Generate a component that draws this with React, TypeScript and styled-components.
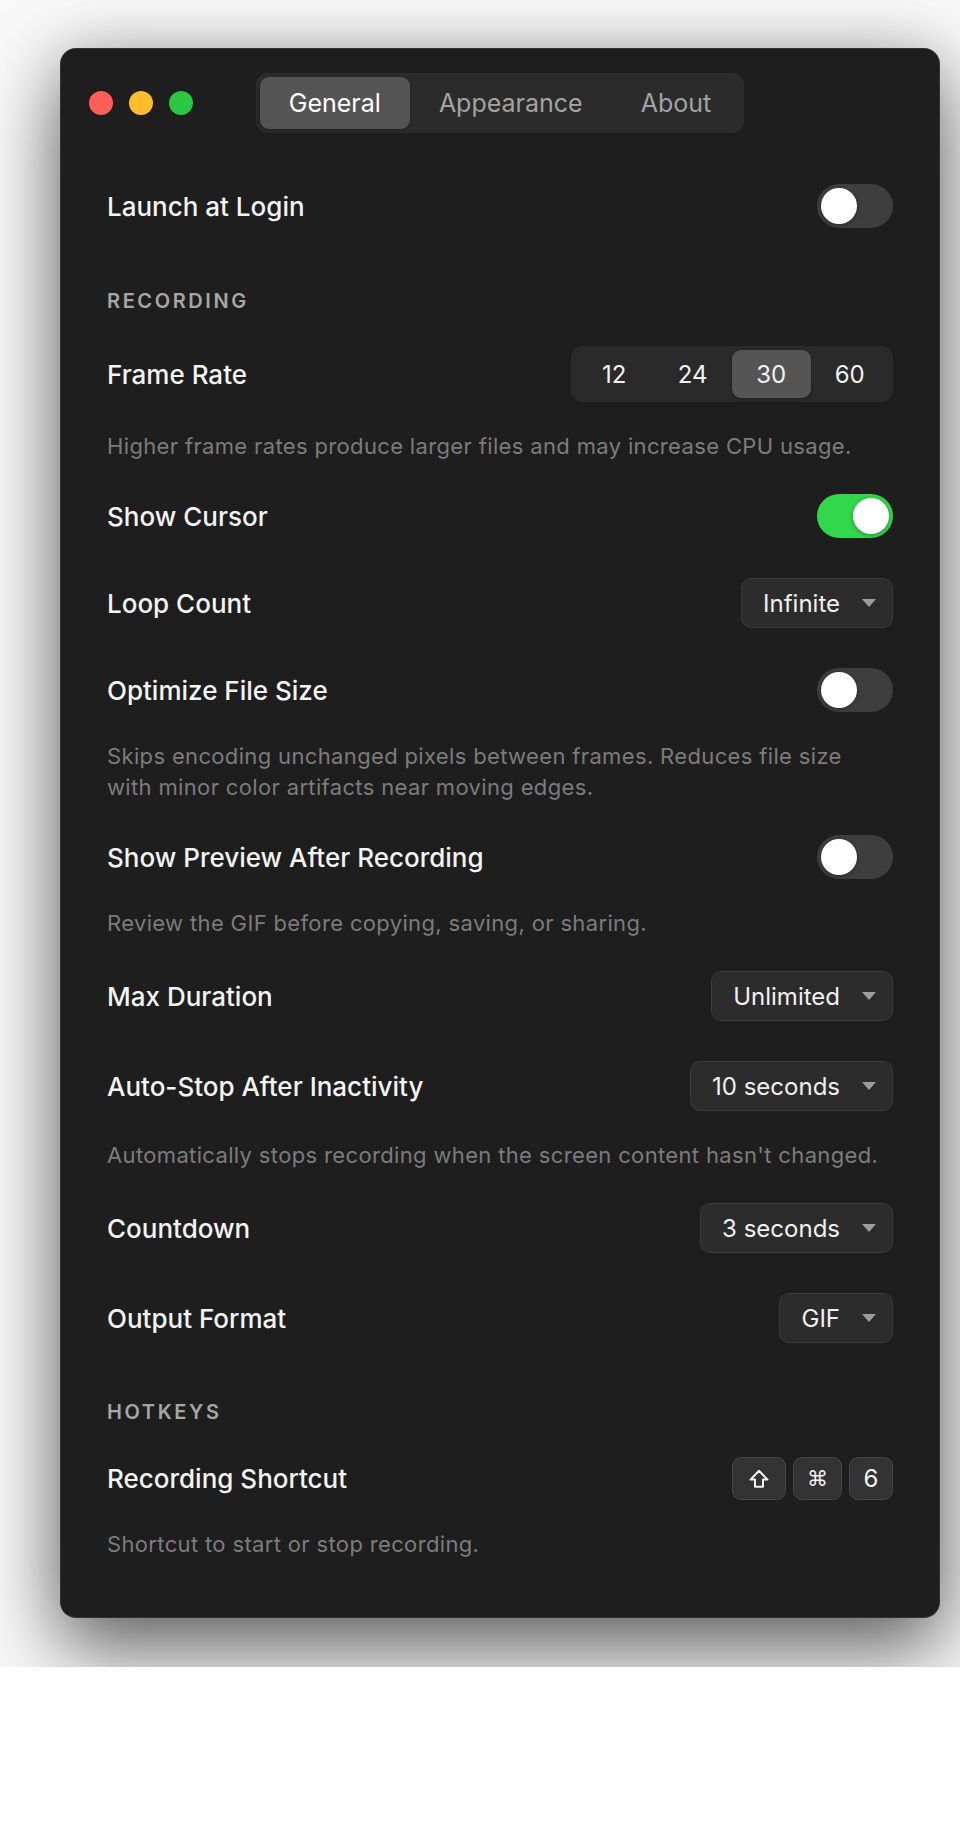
import React, { useState } from 'react';
import styled, { createGlobalStyle } from 'styled-components';

const GlobalStyle = createGlobalStyle`
  html, body {
    margin: 0;
    padding: 0;
    background: #ffffff;
  }
  body {
    font-family: Inter, "Noto Sans", "Liberation Sans", sans-serif;
    -webkit-font-smoothing: antialiased;
  }
  * {
    box-sizing: border-box;
  }
`;

const Stage = styled.div`
  padding: 48px 20px 49px 60px;
  background: #f8f8f8;
  overflow: hidden;
`;

const Window = styled.div`
  width: 880px;
  background: #1e1e1e;
  border-radius: 16px;
  border: 1px solid rgba(255, 255, 255, 0.09);
  box-shadow: 0 34px 80px rgba(0, 0, 0, 0.55), 0 0 60px rgba(0, 0, 0, 0.18);
  padding-bottom: 45px;
`;

const TitleBar = styled.div`
  display: grid;
  grid-template-columns: 1fr auto 1fr;
  align-items: center;
  padding: 24px 28px 0;
`;

const Lights = styled.div`
  display: flex;
  gap: 16px;
`;

const Light = styled.span<{ $color: string }>`
  width: 24px;
  height: 24px;
  border-radius: 50%;
  background: ${p => p.$color};
`;

const Tabs = styled.div`
  display: flex;
  padding: 4px;
  height: 60px;
  background: #2b2b2b;
  border-radius: 12px;
`;

const Tab = styled.button<{ $active?: boolean }>`
  border: none;
  font-family: inherit;
  font-size: 25px;
  padding: 0 29px;
  border-radius: 9px;
  cursor: pointer;
  color: ${p => (p.$active ? '#ffffff' : '#a3a3a3')};
  background: ${p => (p.$active ? '#545454' : 'transparent')};
  box-shadow: ${p => (p.$active ? '0 1px 3px rgba(0,0,0,0.35)' : 'none')};
`;

const Content = styled.div`
  padding: 31px 46px 0;
  display: flex;
  flex-direction: column;
`;

const Row = styled.div`
  display: flex;
  align-items: center;
  justify-content: space-between;
  padding: 20px 0;
`;

const Label = styled.span`
  font-size: 26px;
  font-weight: 500;
  color: #f3f3f3;
`;

const Desc = styled.p`
  margin: 0;
  padding: 9px 0 12px;
  font-size: 22px;
  line-height: 31px;
  color: #7c7c7c;
  letter-spacing: 0.35px;
`;

const SectionTitle = styled.h3<{ $top: number }>`
  margin: ${p => p.$top}px 0 0;
  padding-bottom: 12px;
  font-size: 20px;
  line-height: 26px;
  font-weight: 600;
  letter-spacing: 0.13em;
  color: #a6a6a6;
`;

const Track = styled.button<{ $on: boolean }>`
  width: 76px;
  height: 44px;
  border: none;
  padding: 4px;
  border-radius: 22px;
  cursor: pointer;
  display: flex;
  justify-content: ${p => (p.$on ? 'flex-end' : 'flex-start')};
  background: ${p => (p.$on ? '#32d74b' : '#3e3e3e')};
`;

const Knob = styled.span`
  width: 36px;
  height: 36px;
  border-radius: 50%;
  background: #ffffff;
  box-shadow: 0 1px 4px rgba(0, 0, 0, 0.35);
`;

const Segmented = styled.div`
  display: flex;
  padding: 4px;
  height: 56px;
  background: #2a2a2a;
  border-radius: 12px;
`;

const Segment = styled.button<{ $active?: boolean }>`
  width: 78.5px;
  border: none;
  border-radius: 9px;
  font-family: inherit;
  font-size: 24px;
  cursor: pointer;
  color: #f2f2f2;
  background: ${p => (p.$active ? '#555555' : 'transparent')};
  box-shadow: ${p => (p.$active ? '0 1px 3px rgba(0,0,0,0.35)' : 'none')};
`;

const Select = styled.button`
  display: flex;
  align-items: center;
  gap: 22px;
  height: 50px;
  padding: 0 16px 0 21px;
  background: #2c2c2c;
  border: 1px solid #3b3b3b;
  border-radius: 10px;
  font-family: inherit;
  font-size: 24px;
  color: #f0f0f0;
  cursor: pointer;
`;

const Caret = styled.span`
  width: 0;
  height: 0;
  border-left: 7px solid transparent;
  border-right: 7px solid transparent;
  border-top: 8px solid #9c9c9c;
`;

const Keys = styled.div`
  display: flex;
  gap: 7px;
`;

const Key = styled.kbd<{ $pad?: number }>`
  display: flex;
  align-items: center;
  justify-content: center;
  height: 43px;
  min-width: 44px;
  padding: 0 ${p => p.$pad ?? 13}px;
  background: #333333;
  border: 1px solid #464646;
  border-radius: 9px;
  font-family: Inter, "DejaVu Sans", sans-serif;
  font-size: 24px;
  color: #f2f2f2;
`;

const CmdGlyph = styled.span`
  font-family: "DejaVu Sans", sans-serif;
  font-size: 21px;
`;

function Toggle({ on }: { on: boolean }) {
  const [value, setValue] = useState(on);
  return (
    <Track $on={value} onClick={() => setValue(!value)}>
      <Knob />
    </Track>
  );
}

function Dropdown({ value }: { value: string }) {
  return (
    <Select>
      {value}
      <Caret />
    </Select>
  );
}

const ShiftIcon = () => (
  <svg width="22" height="20" viewBox="0 0 22 20" fill="none">
    <path
      d="M11 1.8 L19.5 10.6 H15 V17.8 H7 V10.6 H2.5 Z"
      stroke="#f2f2f2"
      strokeWidth="2"
      strokeLinejoin="round"
    />
  </svg>
);

export default function App() {
  const [tab, setTab] = useState('General');
  const [fps, setFps] = useState(30);

  return (
    <>
      <GlobalStyle />
      <Stage>
        <Window>
          <TitleBar>
            <Lights>
              <Light $color="#ff5f57" />
              <Light $color="#febc2e" />
              <Light $color="#28c840" />
            </Lights>
            <Tabs>
              {['General', 'Appearance', 'About'].map(t => (
                <Tab key={t} $active={t === tab} onClick={() => setTab(t)}>
                  {t}
                </Tab>
              ))}
            </Tabs>
            <div />
          </TitleBar>

          <Content>
            <Row>
              <Label>Launch at Login</Label>
              <Toggle on={false} />
            </Row>

            <SectionTitle $top={40}>RECORDING</SectionTitle>
            <Row>
              <Label>Frame Rate</Label>
              <Segmented>
                {[12, 24, 30, 60].map(n => (
                  <Segment key={n} $active={n === fps} onClick={() => setFps(n)}>
                    {n}
                  </Segment>
                ))}
              </Segmented>
            </Row>
            <Desc>Higher frame rates produce larger files and may increase CPU usage.</Desc>

            <Row>
              <Label>Show Cursor</Label>
              <Toggle on />
            </Row>
            <Row>
              <Label>Loop Count</Label>
              <Dropdown value="Infinite" />
            </Row>
            <Row>
              <Label>Optimize File Size</Label>
              <Toggle on={false} />
            </Row>
            <Desc>
              Skips encoding unchanged pixels between frames. Reduces file size
              <br />
              with minor color artifacts near moving edges.
            </Desc>

            <Row>
              <Label>Show Preview After Recording</Label>
              <Toggle on={false} />
            </Row>
            <Desc>Review the GIF before copying, saving, or sharing.</Desc>

            <Row>
              <Label>Max Duration</Label>
              <Dropdown value="Unlimited" />
            </Row>
            <Row>
              <Label>Auto-Stop After Inactivity</Label>
              <Dropdown value="10 seconds" />
            </Row>
            <Desc>Automatically stops recording when the screen content hasn't changed.</Desc>

            <Row>
              <Label>Countdown</Label>
              <Dropdown value="3 seconds" />
            </Row>
            <Row>
              <Label>Output Format</Label>
              <Dropdown value="GIF" />
            </Row>

            <SectionTitle $top={36}>HOTKEYS</SectionTitle>
            <Row>
              <Label>Recording Shortcut</Label>
              <Keys>
                <Key $pad={15}>
                  <ShiftIcon />
                </Key>
                <Key>
                  <CmdGlyph>⌘</CmdGlyph>
                </Key>
                <Key>6</Key>
              </Keys>
            </Row>
            <Desc>Shortcut to start or stop recording.</Desc>
          </Content>
        </Window>
      </Stage>
    </>
  );
}
